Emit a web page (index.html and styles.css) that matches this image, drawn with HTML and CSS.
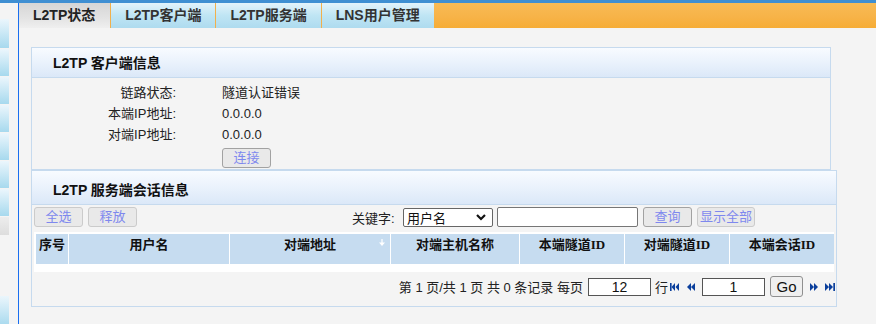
FILE: index.html
```html
<!DOCTYPE html>
<html lang="zh-CN">
<head>
  <meta charset="UTF-8"/>
  <title>L2TP状态</title>
  <link rel="stylesheet" href="styles.css">
</head>
<body>
  <div class="topbar"></div>
  <div class="frame">
    <!-- левое меню -->
    <div class="side">
      <div class="item first"></div>
      <div class="item"></div>
      <div class="item"></div>
      <div class="item"></div>
      <div class="item"></div>
      <div class="item"></div>
      <div class="item"></div>
      <div class="item dim"></div>
      <div class="item low"></div>
    </div>

    <div class="main">
      <div class="tabbar">
        <a class="tab active">L2TP状态</a>
        <a class="tab">L2TP客户端</a>
        <a class="tab">L2TP服务端</a>
        <a class="tab">LNS用户管理</a>
      </div>

      <div class="content">
        <div class="panel p1">
          <div class="panel-hd">L2TP 客户端信息</div>
          <div class="info">
            <div class="lbl">链路状态:</div><div class="val">隧道认证错误</div>
            <div class="lbl">本端IP地址:</div><div class="val">0.0.0.0</div>
            <div class="lbl">对端IP地址:</div><div class="val">0.0.0.0</div>
            <div class="lbl"></div><div class="val btn-row"><button class="btn dark">连接</button></div>
          </div>
        </div>

        <div class="panel p2">
          <div class="panel-hd tall">L2TP 服务端会话信息</div>
          <div class="toolbar">
            <button class="btn">全选</button>
            <button class="btn">释放</button>
            <div class="search">
              <span class="kw">关键字:</span>
              <div class="select">用户名<svg class="chev" width="10" height="7" viewBox="0 0 10 7"><path d="M1 1l4 4 4-4" fill="none" stroke="#111" stroke-width="2.2"/></svg></div>
              <div class="text-in"></div>
              <button class="btn dark">查询</button>
              <button class="btn wide">显示全部</button>
            </div>
          </div>

          <div class="grid-wrap">
            <div class="grid-hd">
              <div class="th">序号</div>
              <div class="th">用户名</div>
              <div class="th">对端地址<svg class="sort" width="6" height="7" viewBox="0 0 6 7"><path d="M3 0v6" stroke="#fff" stroke-width="1.2"/><path d="M0 3.5h6L3 7z" fill="#fff"/></svg></div>
              <div class="th">对端主机名称</div>
              <div class="th">本端隧道ID</div>
              <div class="th">对端隧道ID</div>
              <div class="th">本端会话ID</div>
            </div>
          </div>

          <div class="pager">
            <span>第 1 页/共 1 页 共 0 条记录 每页</span>
            <div class="pg-in per">12</div>
            <span class="row-lbl">行</span>
            <svg class="nav first-pg" width="9" height="8" viewBox="0 0 9 8"><rect x="0" y="0" width="1.6" height="8"/><path d="M5 0v8L1.5 4zM9 0v8L5.5 4z"/></svg>
            <svg class="nav prev" width="8" height="8" viewBox="0 0 8 8"><path d="M4 0v8L0 4zM8 0v8L4 4z"/></svg>
            <div class="pg-in cur">1</div>
            <button class="go">Go</button>
            <svg class="nav next" width="8" height="8" viewBox="0 0 8 8"><path d="M0 0v8l4-4zM4 0v8l4-4z"/></svg>
            <svg class="nav last-pg" width="10" height="8" viewBox="0 0 10 8"><path d="M0 0v8l4-4zM4 0v8l4-4z"/><rect x="8.3" y="0" width="1.7" height="8"/></svg>
          </div>
        </div>
      </div>
    </div>
  </div>
</body>
</html>
```

FILE: styles.css
```css
/* базовые */
* { box-sizing:border-box; }
html, body { margin:0; padding:0; width:100%; height:100%; overflow:hidden; }
body {
  background:#f4f4f4; color:#222;
  font:13px "Liberation Sans","Noto Sans CJK SC",sans-serif;
}
a { color:inherit; text-decoration:none; }

.topbar { height:3px; background:#3f8fd2; }
.frame { display:flex; height:321px; }

/* левое меню */
.side {
  width:19px; padding-top:16px;
  border-right:1px solid #1a6ff0;
  background:#f4f4f4;
}
.side .item {
  width:9px; height:27px; margin-bottom:1px;
  background:linear-gradient(#ebf6fc,#a7d9ee);
}
.side .first { height:29px; }
.side .dim { height:18px; background:linear-gradient(#ededed,#dddddd); }
.side .low { margin-top:61px; height:30px; }

.main { flex:1; display:flex; flex-direction:column; }

/* вкладки */
.tabbar {
  height:25px; display:flex;
  background:linear-gradient(#f8bb55,#f7b348 55%,#f6ad36);
}
.tab {
  padding:0 14px; line-height:25px;
  font-weight:bold; font-size:14px; color:#333;
  background:linear-gradient(#e2f3fb,#bfe5f4 50%,#aedbef);
  border-left:1px solid #f1b04c;
}
.tab.active {
  border-left:0; padding-right:15px; color:#222;
  background:linear-gradient(#d6d6d6,#e3e3e3 60%,#efefef);
}

/* содержимое */
.content { flex:1; padding:19px 0 0 12px; }
.panel { border:1px solid #c6daee; background:#f4f4f4; }
.p1 { width:800px; }
.p2 { width:806px; padding-bottom:9px; }

.panel-hd {
  height:30px; line-height:30px; padding-left:21px;
  font-weight:bold; font-size:14px; color:#111;
  background:linear-gradient(#f8fbff,#eaf2fc 50%,#dbe8f8);
  border-bottom:1px solid #c6daee;
}
.panel-hd.tall { height:34px; line-height:38px; }

.info {
  display:grid; grid-template-columns:144px 1fr;
  column-gap:46px; padding:4px 0 1px;
}
.info .lbl { text-align:right; line-height:21px; color:#222; }
.info .val { line-height:21px; color:#222; }
.info .btn-row { height:23px; padding-top:2px; }

/* кнопки */
.btn {
  width:49px; height:20px; padding:0;
  border:1px solid #cbcbcb; border-radius:3px;
  background:#e9e9e9; color:#7e88ee;
  font:13px "Liberation Sans","Noto Sans CJK SC",sans-serif;
  line-height:18px;
}
.btn.dark { border-color:#a2a2a2; }
.btn.wide { width:58px; }

.toolbar {
  display:flex; align-items:center; gap:5px;
  height:22px; padding:2px 0 0 2px;
}
.search { display:flex; align-items:center; margin-left:210px; }
.search .kw { width:44px; white-space:nowrap; }
.select {
  width:90px; height:19px; margin-left:7px; padding-left:3px;
  border:1px solid #666; border-radius:2px; background:#fff;
  display:flex; align-items:center; justify-content:space-between;
  padding-right:6px; font-size:13px; color:#111;
}
.text-in {
  width:141px; height:20px; margin-left:4px;
  border:1px solid #767676; border-radius:2px; background:#fff;
}
.search .btn { margin-left:5px; }

/* таблица */
.grid-wrap {
  width:800px; margin:5px 0 0 2px;
  background:#fff; padding:2px 0 8px 2px;
}
.grid-hd {
  display:grid; gap:1px;
  grid-template-columns:32px 160px 160px 128px 104px 104px 104px;
}
.th {
  position:relative; height:30px; line-height:30px;
  background:#c6dcf0; text-align:center;
  font:bold 13px "Liberation Serif","Noto Sans CJK SC",serif; color:#111;
}
.th .sort { position:absolute; right:5px; top:5px; }

/* пагинация */
.pager {
  display:flex; align-items:center; justify-content:flex-end;
  height:21px; margin-top:4px; padding-right:1px;
  color:#222; font-size:13px;
}
.pg-in {
  height:18px; width:63px;
  border:1px solid #555; background:#fff;
  text-align:center; line-height:16px; font-size:14px; color:#111;
}
.per { margin-left:5px; }
.row-lbl { margin-left:4px; }
.nav { fill:#0b3f9c; }
.first-pg { margin-left:2px; }
.prev { margin-left:8px; }
.cur { margin-left:7px; }
.go {
  width:33px; height:21px; margin-left:5px; padding:0;
  border:1px solid #8f8f8f; border-radius:3px; background:#efefef;
  font:15px "Liberation Sans",sans-serif; color:#111;
}
.next { margin-left:7px; }
.last-pg { margin-left:7px; }
```
